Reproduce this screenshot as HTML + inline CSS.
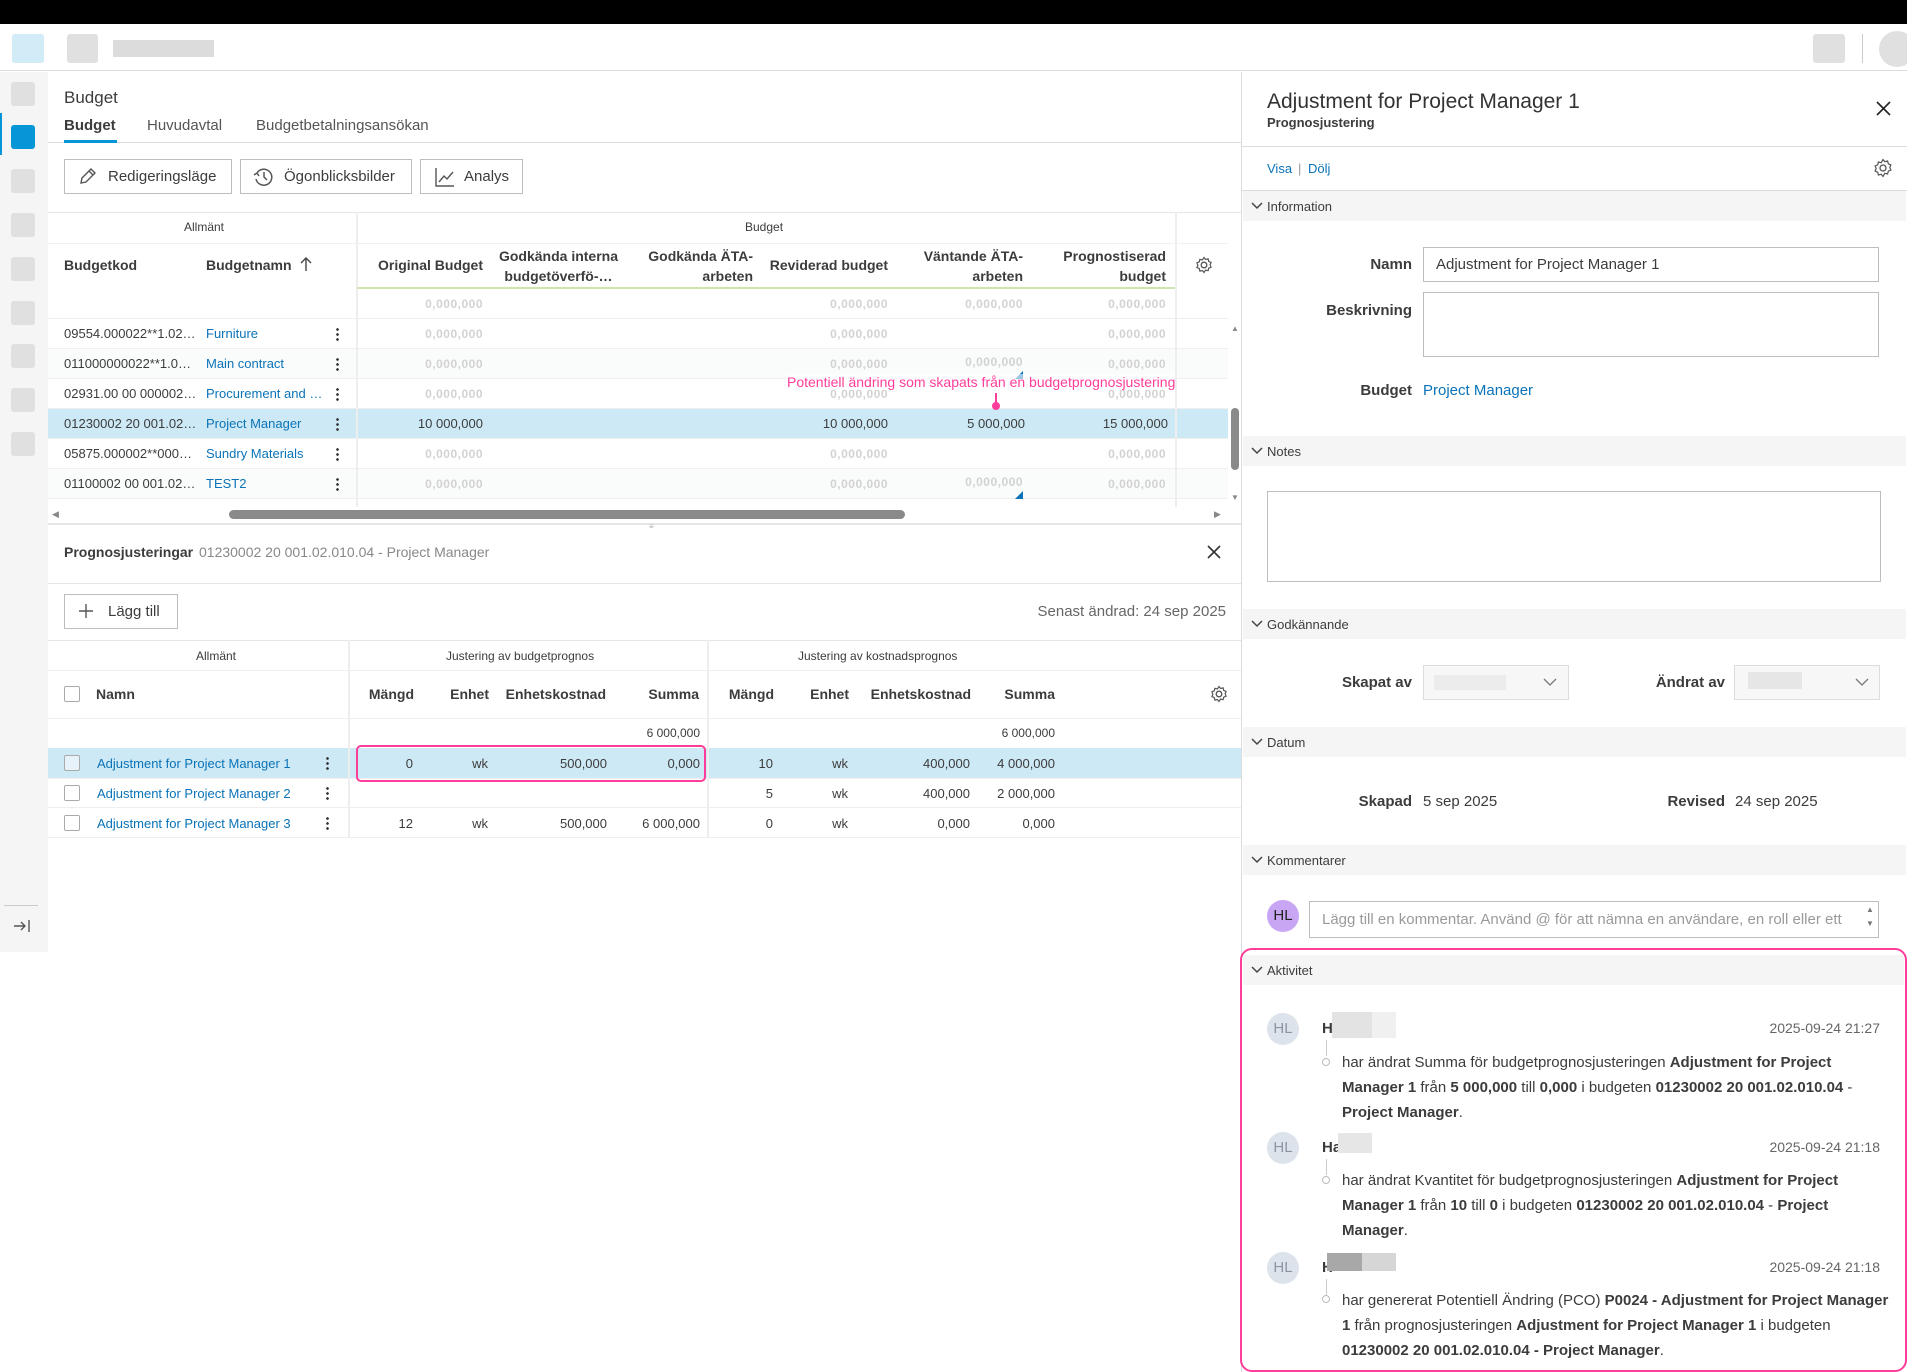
<!DOCTYPE html>
<html><head><meta charset="utf-8"><style>
*{box-sizing:border-box;margin:0;padding:0}
body{width:1907px;height:1372px;position:relative;background:#fff;font-family:"Liberation Sans",sans-serif;color:#3c3c3c;overflow:hidden;font-size:13px}
.a{position:absolute;white-space:nowrap}
.g{background:#e0e0e0;border-radius:3px}
.ph{color:#d2d2d2;font-weight:bold;letter-spacing:0.5px;font-size:12px}
.lk{color:#0a73b8}
.hd{font-weight:bold;font-size:14px;color:#3c3c3c}
.sec{position:absolute;left:1243px;width:663px;height:30px;background:#f5f5f5;font-size:13px;color:#3c3c3c}
.sec span{position:absolute;left:24px;top:8px}
.sec svg{position:absolute;left:8px;top:11px}
.lbl{font-weight:bold;font-size:15px;text-align:right}
.box{position:absolute;border:1px solid #bdbdbd;background:#fff}
.row{position:absolute;left:48px;width:1180px;height:30px;border-bottom:1px solid #efefef}
.t15{font-size:15px}
.kb{position:absolute;width:3px;height:14px;background:radial-gradient(circle,#333 1.2px,transparent 1.5px) 0 0/3px 5px repeat-y}
</style></head><body>
<div class="a" style="left:0;top:0;width:1907px;height:24px;background:#000"></div>
<div class="a" style="left:0;top:24px;width:1907px;height:47px;border-bottom:1px solid #dcdcdc"></div>
<div class="a" style="left:12px;top:34px;width:32px;height:29px;background:#d2ecf7;border-radius:3px"></div>
<div class="a g" style="left:67px;top:34px;width:31px;height:29px"></div>
<div class="a" style="left:113px;top:40px;width:101px;height:17px;background:#dcdcdc"></div>
<div class="a g" style="left:1813px;top:34px;width:32px;height:29px"></div>
<div class="a" style="left:1862px;top:34px;width:1px;height:29px;background:#ccc"></div>
<div class="a" style="left:1879px;top:31px;width:36px;height:36px;background:#e0e0e0;border-radius:50%"></div>

<div class="a" style="left:0;top:72px;width:48px;height:880px;background:#f5f5f5"></div>
<div class="a g" style="left:11px;top:82px;width:24px;height:24px"></div>
<div class="a" style="left:0;top:113px;width:2px;height:42px;background:#0696d7"></div>
<div class="a" style="left:11px;top:125px;width:24px;height:24px;background:#0696d7;border-radius:3px"></div>
<div class="a g" style="left:11px;top:169px;width:24px;height:24px"></div>
<div class="a g" style="left:11px;top:213px;width:24px;height:24px"></div>
<div class="a g" style="left:11px;top:257px;width:24px;height:24px"></div>
<div class="a g" style="left:11px;top:301px;width:24px;height:24px"></div>
<div class="a g" style="left:11px;top:344px;width:24px;height:24px"></div>
<div class="a g" style="left:11px;top:388px;width:24px;height:24px"></div>
<div class="a g" style="left:11px;top:432px;width:24px;height:24px"></div>
<div class="a" style="left:4px;top:905px;width:34px;height:1px;background:#ccc"></div>
<svg class="a" style="left:13px;top:918px" width="20" height="16"><path d="M1 8h11M8 4l4 4-4 4M16 2v12" stroke="#555" stroke-width="1.4" fill="none"/></svg>

<div class="a" style="left:64px;top:88px;font-size:17px">Budget</div>
<div class="a" style="left:64px;top:117px;font-size:15px;font-weight:bold">Budget</div>
<div class="a" style="left:147px;top:117px;font-size:15px;color:#555">Huvudavtal</div>
<div class="a" style="left:256px;top:117px;font-size:15px;color:#555">Budgetbetalningsansökan</div>
<div class="a" style="left:48px;top:142px;width:1193px;height:1px;background:#dcdcdc"></div>
<div class="a" style="left:64px;top:140px;width:53px;height:3px;background:#0696d7"></div>

<div class="box" style="left:64px;top:159px;width:168px;height:35px"></div>
<svg class="a" style="left:78px;top:166px" width="20" height="20"><path d="M3 17l1-5L13 3l4 4-9 9zM11 5l4 4" stroke="#555" stroke-width="1.4" fill="none"/></svg>
<div class="a t15" style="left:108px;top:168px">Redigeringsläge</div>
<div class="box" style="left:240px;top:159px;width:172px;height:35px"></div>
<svg class="a" style="left:252px;top:166px" width="22" height="22"><path d="M5 7a8 8 0 1 1-1 6M2 9l3-2 2 3M12 6v5l3 3" stroke="#555" stroke-width="1.5" fill="none"/></svg>
<div class="a t15" style="left:284px;top:168px">Ögonblicksbilder</div>
<div class="box" style="left:420px;top:159px;width:103px;height:35px"></div>
<svg class="a" style="left:434px;top:166px" width="22" height="22"><path d="M2 2v18h18M5 16l5-6 3 3 6-7" stroke="#555" stroke-width="1.4" fill="none"/></svg>
<div class="a t15" style="left:464px;top:168px">Analys</div>

<div class="a" style="left:48px;top:212px;width:1193px;height:1px;background:#e6e6e6"></div>
<div class="a" style="left:356px;top:212px;width:2px;height:295px;background:#eee"></div>
<div class="a" style="left:1175px;top:212px;width:2px;height:295px;background:#eee"></div>
<div class="a" style="left:184px;top:220px;font-size:12px">Allmänt</div>
<div class="a" style="left:745px;top:220px;font-size:12px">Budget</div>
<div class="a" style="left:48px;top:243px;width:1180px;height:1px;background:#f0f0f0"></div>
<div class="a hd" style="left:64px;top:257px">Budgetkod</div>
<div class="a hd" style="left:206px;top:257px">Budgetnamn</div>
<svg class="a" style="left:300px;top:256px" width="12" height="16"><path d="M6 15V2M1 7l5-5 5 5" stroke="#444" stroke-width="1.4" fill="none"/></svg>
<div class="a hd" style="right:1424px;top:257px">Original Budget</div>
<div class="a hd" style="right:1289px;top:246px;text-align:center;line-height:20px">Godkända interna<br>budgetöverfö-…</div>
<div class="a hd" style="right:1154px;top:246px;text-align:right;line-height:20px">Godkända ÄTA-<br>arbeten</div>
<div class="a hd" style="right:1019px;top:257px">Reviderad budget</div>
<div class="a hd" style="right:884px;top:246px;text-align:right;line-height:20px">Väntande ÄTA-<br>arbeten</div>
<div class="a hd" style="right:741px;top:246px;text-align:right;line-height:20px">Prognostiserad<br>budget</div>
<svg class="a" style="left:1195px;top:256px" width="18" height="18"><circle cx="9" cy="9" r="2.8" stroke="#555" stroke-width="1.3" fill="none"/><path d="M9 1.5l1.6 2 2.5-.6.6 2.5 2.4 1-1 2.4 1 2.4-2.4 1-.6 2.5-2.5-.6L9 16.5l-1.6-2-2.5.6-.6-2.5-2.4-1 1-2.4-1-2.4 2.4-1 .6-2.5 2.5.6z" stroke="#555" stroke-width="1.2" fill="none"/></svg>
<div class="a" style="left:357px;top:287px;width:818px;height:2px;background:#cde6b0"></div>

<div class="row" style="top:289px"></div>
<div class="row" style="top:319px"></div>
<div class="row" style="top:349px;background:#fafbfb"></div>
<div class="row" style="top:379px"></div>
<div class="row" style="top:409px;background:#cde9f6"></div>
<div class="row" style="top:439px"></div>
<div class="row" style="top:469px;background:#fafbfb"></div>
<div class="a" style="left:356px;top:289px;width:2px;height:218px;background:#eee"></div>
<div class="a" style="left:1175px;top:289px;width:2px;height:218px;background:#eee"></div>

<div class="a ph" style="right:1424px;top:297px">0,000,000</div>
<div class="a ph" style="right:1019px;top:297px">0,000,000</div>
<div class="a ph" style="right:884px;top:297px">0,000,000</div>
<div class="a ph" style="right:741px;top:297px">0,000,000</div>

<div class="a" style="left:64px;top:326px">09554.000022**1.02…</div><div class="a lk" style="left:206px;top:326px">Furniture</div>
<div class="a ph" style="right:1424px;top:327px">0,000,000</div><div class="a ph" style="right:1019px;top:327px">0,000,000</div><div class="a ph" style="right:741px;top:327px">0,000,000</div>
<div class="a" style="left:64px;top:356px">011000000022**1.0…</div><div class="a lk" style="left:206px;top:356px">Main contract</div>
<div class="a ph" style="right:1424px;top:357px">0,000,000</div><div class="a ph" style="right:1019px;top:357px">0,000,000</div><div class="a ph" style="right:884px;top:355px">0,000,000</div><div class="a ph" style="right:741px;top:357px">0,000,000</div>
<div class="a" style="left:64px;top:386px">02931.00 00 000002…</div><div class="a lk" style="left:206px;top:386px">Procurement and …</div>
<div class="a ph" style="right:1424px;top:387px">0,000,000</div><div class="a ph" style="right:1019px;top:387px">0,000,000</div><div class="a ph" style="right:741px;top:387px">0,000,000</div>
<div class="a" style="left:64px;top:416px">01230002 20 001.02…</div><div class="a lk" style="left:206px;top:416px">Project Manager</div>
<div class="a" style="right:1424px;top:416px">10 000,000</div><div class="a" style="right:1019px;top:416px">10 000,000</div><div class="a" style="right:882px;top:416px">5 000,000</div><div class="a" style="right:739px;top:416px">15 000,000</div>
<div class="a" style="left:64px;top:446px">05875.000002**000…</div><div class="a lk" style="left:206px;top:446px">Sundry Materials</div>
<div class="a ph" style="right:1424px;top:447px">0,000,000</div><div class="a ph" style="right:1019px;top:447px">0,000,000</div><div class="a ph" style="right:741px;top:447px">0,000,000</div>
<div class="a" style="left:64px;top:476px">01100002 00 001.02…</div><div class="a lk" style="left:206px;top:476px">TEST2</div>
<div class="a ph" style="right:1424px;top:477px">0,000,000</div><div class="a ph" style="right:1019px;top:477px">0,000,000</div><div class="a ph" style="right:884px;top:475px">0,000,000</div><div class="a ph" style="right:741px;top:477px">0,000,000</div>
<div class="kb" style="left:336px;top:327px"></div>
<div class="kb" style="left:336px;top:357px"></div>
<div class="kb" style="left:336px;top:387px"></div>
<div class="kb" style="left:336px;top:417px"></div>
<div class="kb" style="left:336px;top:447px"></div>
<div class="kb" style="left:336px;top:477px"></div>
<svg class="a" style="left:1015px;top:371px" width="8" height="8"><path d="M8 0v8H0z" fill="#0a73b8"/></svg>
<svg class="a" style="left:1015px;top:491px" width="8" height="8"><path d="M8 0v8H0z" fill="#0a73b8"/></svg>
<div class="a" style="left:787px;top:374px;color:#ff3d9a;font-size:14px;background:rgba(255,255,255,0.6)">Potentiell ändring som skapats från en budgetprognosjustering</div>
<div class="a" style="left:995px;top:393px;width:2px;height:12px;background:#ff3d9a"></div>
<div class="a" style="left:992px;top:402px;width:8px;height:8px;border-radius:50%;background:#ff3d9a"></div>
<div class="a" style="left:1231px;top:324px;font-size:8px;color:#888">▲</div>
<div class="a" style="left:1231px;top:493px;font-size:8px;color:#888">▼</div>
<div class="a" style="left:1231px;top:408px;width:8px;height:62px;background:#8a8a8a;border-radius:4px"></div>
<div class="a" style="left:48px;top:507px;width:1180px;height:16px;background:#fff"></div>
<div class="a" style="left:52px;top:509px;font-size:9px;color:#888">◀</div>
<div class="a" style="left:1214px;top:509px;font-size:9px;color:#888">▶</div>
<div class="a" style="left:229px;top:510px;width:676px;height:9px;background:#8a8a8a;border-radius:5px"></div>
<div class="a" style="left:48px;top:523px;width:1193px;height:2px;background:#e6e6e6"></div>
<div class="a" style="left:649px;top:522px;font-size:8px;color:#aaa">≡</div>

<div class="a" style="left:64px;top:544px;font-size:14px;font-weight:bold">Prognosjusteringar</div>
<div class="a" style="left:199px;top:544px;font-size:14px;color:#888">01230002 20 001.02.010.04 - Project Manager</div>
<svg class="a" style="left:1206px;top:544px" width="16" height="16"><path d="M2 2l12 12M14 2L2 14" stroke="#333" stroke-width="1.6"/></svg>
<div class="a" style="left:48px;top:583px;width:1193px;height:1px;background:#e6e6e6"></div>
<div class="box" style="left:64px;top:594px;width:114px;height:35px"></div>
<svg class="a" style="left:78px;top:603px" width="16" height="16"><path d="M8 1v14M1 8h14" stroke="#555" stroke-width="1.4"/></svg>
<div class="a t15" style="left:108px;top:603px">Lägg till</div>
<div class="a t15" style="right:681px;top:603px;color:#666">Senast ändrad: 24 sep 2025</div>
<div class="a" style="left:48px;top:640px;width:1193px;height:1px;background:#e6e6e6"></div>
<div class="a" style="left:348px;top:640px;width:2px;height:198px;background:#eee"></div>
<div class="a" style="left:707px;top:640px;width:2px;height:198px;background:#eee"></div>
<div class="a" style="left:196px;top:649px;font-size:12px">Allmänt</div>
<div class="a" style="left:446px;top:649px;font-size:12px">Justering av budgetprognos</div>
<div class="a" style="left:798px;top:649px;font-size:12px">Justering av kostnadsprognos</div>
<div class="a" style="left:48px;top:670px;width:1193px;height:1px;background:#f0f0f0"></div>
<div class="a" style="left:64px;top:686px;width:16px;height:16px;border:1px solid #aaa;border-radius:2px"></div>
<div class="a hd" style="left:96px;top:686px">Namn</div>
<div class="a hd" style="right:1493px;top:686px">Mängd</div>
<div class="a hd" style="right:1418px;top:686px">Enhet</div>
<div class="a hd" style="right:1301px;top:686px">Enhetskostnad</div>
<div class="a hd" style="right:1208px;top:686px">Summa</div>
<div class="a hd" style="right:1133px;top:686px">Mängd</div>
<div class="a hd" style="right:1058px;top:686px">Enhet</div>
<div class="a hd" style="right:936px;top:686px">Enhetskostnad</div>
<div class="a hd" style="right:852px;top:686px">Summa</div>
<svg class="a" style="left:1210px;top:685px" width="18" height="18"><circle cx="9" cy="9" r="2.8" stroke="#555" stroke-width="1.3" fill="none"/><path d="M9 1.5l1.6 2 2.5-.6.6 2.5 2.4 1-1 2.4 1 2.4-2.4 1-.6 2.5-2.5-.6L9 16.5l-1.6-2-2.5.6-.6-2.5-2.4-1 1-2.4-1-2.4 2.4-1 .6-2.5 2.5.6z" stroke="#555" stroke-width="1.2" fill="none"/></svg>
<div class="a" style="left:48px;top:718px;width:1193px;height:1px;background:#f0f0f0"></div>
<div class="a" style="right:1207px;top:726px;font-size:12px">6 000,000</div>
<div class="a" style="right:852px;top:726px;font-size:12px">6 000,000</div>
<div class="a" style="left:48px;top:748px;width:1193px;height:30px;background:#cde9f6"></div>
<div class="a" style="left:48px;top:778px;width:1193px;height:30px;border-top:1px solid #efefef;border-bottom:1px solid #efefef"></div>
<div class="a" style="left:48px;top:837px;width:1193px;height:1px;background:#efefef"></div>
<div class="a" style="left:348px;top:748px;width:2px;height:90px;background:#eee"></div>
<div class="a" style="left:707px;top:748px;width:2px;height:90px;background:#eee"></div>
<div class="a" style="left:64px;top:755px;width:16px;height:16px;border:1px solid #aaa;border-radius:2px;background:#e6f3fa"></div>
<div class="a" style="left:64px;top:785px;width:16px;height:16px;border:1px solid #aaa;border-radius:2px"></div>
<div class="a" style="left:64px;top:815px;width:16px;height:16px;border:1px solid #aaa;border-radius:2px"></div>
<div class="a lk" style="left:97px;top:756px">Adjustment for Project Manager 1</div>
<div class="a lk" style="left:97px;top:786px">Adjustment for Project Manager 2</div>
<div class="a lk" style="left:97px;top:816px">Adjustment for Project Manager 3</div>
<div class="kb" style="left:326px;top:756px"></div>
<div class="kb" style="left:326px;top:786px"></div>
<div class="kb" style="left:326px;top:816px"></div>
<div class="a" style="right:1494px;top:756px">0</div><div class="a" style="right:1419px;top:756px">wk</div><div class="a" style="right:1300px;top:756px">500,000</div><div class="a" style="right:1207px;top:756px">0,000</div>
<div class="a" style="right:1134px;top:756px">10</div><div class="a" style="right:1059px;top:756px">wk</div><div class="a" style="right:937px;top:756px">400,000</div><div class="a" style="right:852px;top:756px">4 000,000</div>
<div class="a" style="right:1134px;top:786px">5</div><div class="a" style="right:1059px;top:786px">wk</div><div class="a" style="right:937px;top:786px">400,000</div><div class="a" style="right:852px;top:786px">2 000,000</div>
<div class="a" style="right:1494px;top:816px">12</div><div class="a" style="right:1419px;top:816px">wk</div><div class="a" style="right:1300px;top:816px">500,000</div><div class="a" style="right:1207px;top:816px">6 000,000</div>
<div class="a" style="right:1134px;top:816px">0</div><div class="a" style="right:1059px;top:816px">wk</div><div class="a" style="right:937px;top:816px">0,000</div><div class="a" style="right:852px;top:816px">0,000</div>
<div class="a" style="left:356px;top:745px;width:350px;height:37px;border:2px solid #ff3d9a;border-radius:5px"></div>

<div class="a" style="left:1241px;top:72px;width:1px;height:1300px;background:#dcdcdc"></div>
<div class="a" style="left:1267px;top:90px;font-size:21px;color:#333">Adjustment for Project Manager 1</div>
<div class="a" style="left:1267px;top:115px;font-size:13px;font-weight:bold">Prognosjustering</div>
<svg class="a" style="left:1876px;top:101px" width="15" height="15"><path d="M1 1l13 13M14 1L1 14" stroke="#222" stroke-width="1.6"/></svg>
<div class="a" style="left:1242px;top:146px;width:665px;height:1px;background:#dcdcdc"></div>
<div class="a lk" style="left:1267px;top:161px;font-size:13px">Visa</div>
<div class="a" style="left:1298px;top:161px;font-size:13px;color:#999">|</div>
<div class="a lk" style="left:1308px;top:161px;font-size:13px">Dölj</div>
<svg class="a" style="left:1873px;top:158px" width="20" height="20"><circle cx="10" cy="10" r="3" stroke="#555" stroke-width="1.3" fill="none"/><path d="M10 1.5l1.8 2.2 2.8-.7.7 2.8 2.6 1.1-1.1 2.6 1.1 2.6-2.6 1.1-.7 2.8-2.8-.7L10 18.5l-1.8-2.2-2.8.7-.7-2.8-2.6-1.1 1.1-2.6-1.1-2.6 2.6-1.1.7-2.8 2.8.7z" stroke="#555" stroke-width="1.2" fill="none"/></svg>
<div class="a" style="left:1242px;top:190px;width:665px;height:1px;background:#dcdcdc"></div>

<div class="sec" style="top:191px"><svg width="12" height="8"><path d="M1 1l5 5 5-5" stroke="#444" stroke-width="1.5" fill="none"/></svg><span>Information</span></div>
<div class="a lbl" style="right:495px;top:256px">Namn</div>
<div class="box" style="left:1423px;top:247px;width:456px;height:35px"></div>
<div class="a t15" style="left:1436px;top:256px">Adjustment for Project Manager 1</div>
<div class="a lbl" style="right:495px;top:302px">Beskrivning</div>
<div class="box" style="left:1423px;top:292px;width:456px;height:65px"></div>
<div class="a lbl" style="right:495px;top:382px">Budget</div>
<div class="a lk t15" style="left:1423px;top:382px">Project Manager</div>

<div class="sec" style="top:436px"><svg width="12" height="8"><path d="M1 1l5 5 5-5" stroke="#444" stroke-width="1.5" fill="none"/></svg><span>Notes</span></div>
<div class="box" style="left:1267px;top:491px;width:614px;height:91px"></div>
<div class="sec" style="top:609px"><svg width="12" height="8"><path d="M1 1l5 5 5-5" stroke="#444" stroke-width="1.5" fill="none"/></svg><span>Godkännande</span></div>
<div class="a lbl" style="right:495px;top:674px">Skapat av</div>
<div class="box" style="left:1423px;top:665px;width:146px;height:35px;background:#f7f7f7;border-color:#ddd"></div>
<div class="a" style="left:1434px;top:675px;width:72px;height:15px;background:#ececec"></div>
<svg class="a" style="left:1543px;top:678px" width="14" height="8"><path d="M1 1l6 6 6-6" stroke="#777" stroke-width="1.3" fill="none"/></svg>
<div class="a lbl" style="right:182px;top:674px">Ändrat av</div>
<div class="box" style="left:1734px;top:665px;width:146px;height:35px;background:#f7f7f7;border-color:#ddd"></div>
<div class="a" style="left:1748px;top:672px;width:54px;height:17px;background:#e6e6e6"></div>
<svg class="a" style="left:1855px;top:678px" width="14" height="8"><path d="M1 1l6 6 6-6" stroke="#777" stroke-width="1.3" fill="none"/></svg>

<div class="sec" style="top:727px"><svg width="12" height="8"><path d="M1 1l5 5 5-5" stroke="#444" stroke-width="1.5" fill="none"/></svg><span>Datum</span></div>
<div class="a lbl" style="right:495px;top:793px">Skapad</div>
<div class="a t15" style="left:1423px;top:793px">5 sep 2025</div>
<div class="a lbl" style="right:182px;top:793px">Revised</div>
<div class="a t15" style="left:1735px;top:793px">24 sep 2025</div>

<div class="sec" style="top:845px"><svg width="12" height="8"><path d="M1 1l5 5 5-5" stroke="#444" stroke-width="1.5" fill="none"/></svg><span>Kommentarer</span></div>
<div class="a" style="left:1267px;top:900px;width:32px;height:32px;border-radius:50%;background:#c9a6f3;color:#222;font-size:15px;text-align:center;line-height:32px">HL</div>
<div class="box" style="left:1309px;top:901px;width:570px;height:37px;overflow:hidden"><div style="position:absolute;left:12px;top:9px;font-size:15px;color:#9a9a9a;white-space:nowrap">Lägg till en kommentar. Använd @ för att nämna en användare, en roll eller ett</div></div>
<div class="a" style="left:1866px;top:903px;font-size:8px;color:#777;line-height:14px">▲<br>▼</div>

<div class="a" style="left:1240px;top:948px;width:667px;height:424px;border:2px solid #ff3d9a;border-radius:12px"></div>
<div class="sec" style="top:955px;left:1243px;width:661px"><svg width="12" height="8"><path d="M1 1l5 5 5-5" stroke="#444" stroke-width="1.5" fill="none"/></svg><span>Aktivitet</span></div>

<div class="a" style="left:1267px;top:1013px;width:32px;height:32px;border-radius:50%;background:#dde3ea;color:#8a96a3;font-size:15px;text-align:center;line-height:32px">HL</div>
<div class="a" style="left:1322px;top:1020px;font-weight:bold;font-size:15px">H</div>
<div class="a" style="left:1332px;top:1012px;width:40px;height:26px;background:#e3e3e3"></div>
<div class="a" style="left:1372px;top:1012px;width:24px;height:26px;background:#f0f0f0"></div>
<div class="a" style="right:27px;top:1020px;font-size:14px;color:#666">2025-09-24 21:27</div>
<div class="a" style="left:1326px;top:1040px;width:1px;height:16px;background:#ccc"></div>
<div class="a" style="left:1322px;top:1058px;width:8px;height:8px;border:1.5px solid #bbb;border-radius:50%"></div>
<div class="a t15" style="left:1342px;top:1050px;line-height:25px">har ändrat Summa för budgetprognosjusteringen <b>Adjustment for Project</b><br><b>Manager 1</b> från <b>5 000,000</b> till <b>0,000</b> i budgeten <b>01230002 20 001.02.010.04</b> -<br><b>Project Manager</b>.</div>

<div class="a" style="left:1267px;top:1132px;width:32px;height:32px;border-radius:50%;background:#dde3ea;color:#8a96a3;font-size:15px;text-align:center;line-height:32px">HL</div>
<div class="a" style="left:1322px;top:1139px;font-weight:bold;font-size:15px">Ha</div>
<div class="a" style="left:1338px;top:1133px;width:34px;height:20px;background:#e6e6e6"></div>
<div class="a" style="right:27px;top:1139px;font-size:14px;color:#666">2025-09-24 21:18</div>
<div class="a" style="left:1326px;top:1159px;width:1px;height:16px;background:#ccc"></div>
<div class="a" style="left:1322px;top:1176px;width:8px;height:8px;border:1.5px solid #bbb;border-radius:50%"></div>
<div class="a t15" style="left:1342px;top:1168px;line-height:25px">har ändrat Kvantitet för budgetprognosjusteringen <b>Adjustment for Project</b><br><b>Manager 1</b> från <b>10</b> till <b>0</b> i budgeten <b>01230002 20 001.02.010.04</b> - <b>Project</b><br><b>Manager</b>.</div>

<div class="a" style="left:1267px;top:1252px;width:32px;height:32px;border-radius:50%;background:#dde3ea;color:#8a96a3;font-size:15px;text-align:center;line-height:32px">HL</div>
<div class="a" style="left:1322px;top:1259px;font-weight:bold;font-size:15px">H</div>
<div class="a" style="left:1327px;top:1253px;width:50px;height:18px;background:#a8a8a8"></div>
<div class="a" style="left:1362px;top:1253px;width:34px;height:18px;background:#d6d6d6"></div>
<div class="a" style="right:27px;top:1259px;font-size:14px;color:#666">2025-09-24 21:18</div>
<div class="a" style="left:1326px;top:1279px;width:1px;height:16px;background:#ccc"></div>
<div class="a" style="left:1322px;top:1295px;width:8px;height:8px;border:1.5px solid #bbb;border-radius:50%"></div>
<div class="a t15" style="left:1342px;top:1288px;line-height:25px">har genererat Potentiell Ändring (PCO) <b>P0024 - Adjustment for Project Manager</b><br><b>1</b> från prognosjusteringen <b>Adjustment for Project Manager 1</b> i budgeten<br><b>01230002 20 001.02.010.04 - Project Manager</b>.</div>
</body></html>
